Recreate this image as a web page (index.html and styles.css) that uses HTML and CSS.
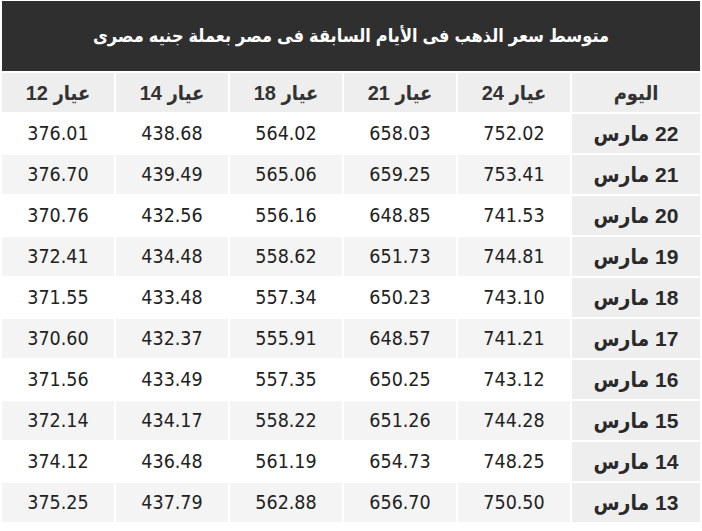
FILE: index.html
```html
<!DOCTYPE html>
<html lang="ar" dir="rtl">
<head>
<meta charset="utf-8">
<link rel="stylesheet" href="styles.css">
</head>
<body>
<table class="gold">
  <colgroup>
    <col class="c-day"><col class="c-k"><col class="c-k"><col class="c-k"><col class="c-k"><col class="c-k">
  </colgroup>
  <thead>
    <tr><th colspan="6" class="title">متوسط سعر الذهب فى الأيام السابقة فى مصر بعملة جنيه مصرى</th></tr>
    <tr class="head">
      <th>اليوم</th><th>عيار 24</th><th>عيار 21</th><th>عيار 18</th><th>عيار 14</th><th>عيار 12</th>
    </tr>
  </thead>
  <tbody>
    <tr><th class="day">22 مارس</th><td>752.02</td><td>658.03</td><td>564.02</td><td>438.68</td><td>376.01</td></tr>
    <tr><th class="day">21 مارس</th><td>753.41</td><td>659.25</td><td>565.06</td><td>439.49</td><td>376.70</td></tr>
    <tr><th class="day">20 مارس</th><td>741.53</td><td>648.85</td><td>556.16</td><td>432.56</td><td>370.76</td></tr>
    <tr><th class="day">19 مارس</th><td>744.81</td><td>651.73</td><td>558.62</td><td>434.48</td><td>372.41</td></tr>
    <tr><th class="day">18 مارس</th><td>743.10</td><td>650.23</td><td>557.34</td><td>433.48</td><td>371.55</td></tr>
    <tr><th class="day">17 مارس</th><td>741.21</td><td>648.57</td><td>555.91</td><td>432.37</td><td>370.60</td></tr>
    <tr><th class="day">16 مارس</th><td>743.12</td><td>650.25</td><td>557.35</td><td>433.49</td><td>371.56</td></tr>
    <tr><th class="day">15 مارس</th><td>744.28</td><td>651.26</td><td>558.22</td><td>434.17</td><td>372.14</td></tr>
    <tr><th class="day">14 مارس</th><td>748.25</td><td>654.73</td><td>561.19</td><td>436.48</td><td>374.12</td></tr>
    <tr><th class="day">13 مارس</th><td>750.50</td><td>656.70</td><td>562.88</td><td>437.79</td><td>375.25</td></tr>
  </tbody>
</table>
</body>
</html>
```
FILE: styles.css
```css
html, body {
  margin: 0;
  padding: 0;
  background: #fff;
}
.gold {
  width: 702px;
  border-collapse: separate;
  border-spacing: 2px;
  table-layout: fixed;
  margin: -1px 0 0 -1px;
  font-family: "Liberation Sans", "DejaVu Sans Condensed", "DejaVu Sans", sans-serif;
  color: #2a2a2a;
}
.c-day { width: 128px; }
.c-k { width: 112px; }
.gold th, .gold td {
  padding: 0;
  text-align: center;
  vertical-align: middle;
}
.title {
  height: 70px;
  background: #2f2f2f;
  color: #fff;
  font-weight: bold;
  font-size: 18px;
}
.head th {
  height: 39px;
  background: #eeeeee;
  font-weight: bold;
  font-size: 20px;
  color: #333;
}
.gold td, .day {
  height: 39px;
}
.gold td {
  font-family: "DejaVu Sans Condensed", "DejaVu Sans", sans-serif;
  font-size: 19.5px;
  color: #222;
  background: #fff;
}
.gold tbody tr:nth-child(even) td {
  background: #f4f4f4;
}
.day {
  background: #eeeeee;
  font-weight: bold;
  font-size: 21px;
  color: #2a2a2a;
}
```
